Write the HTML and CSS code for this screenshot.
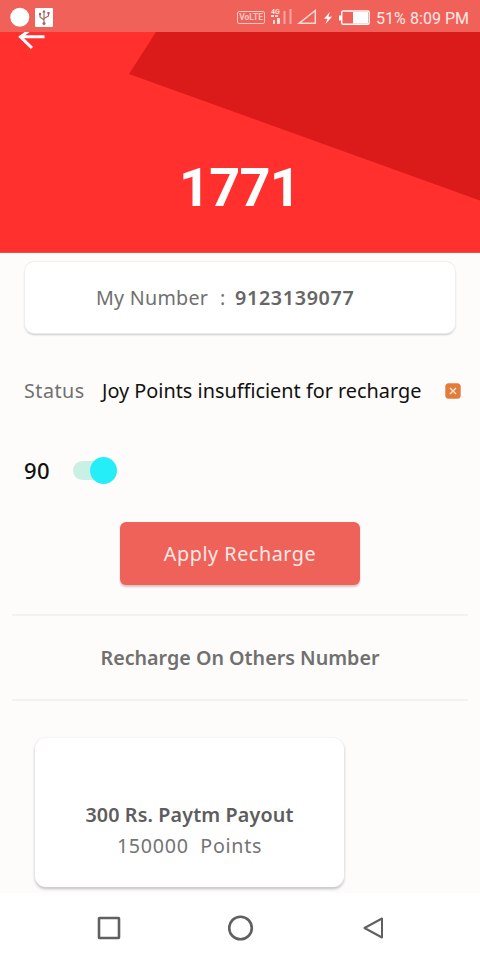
FILE: index.html
```html
<!DOCTYPE html>
<html lang="en">
<head>
<meta charset="utf-8">
<meta name="viewport" content="width=device-width, initial-scale=1">
<title>Recharge</title>
<link rel="stylesheet" href="styles.css">
</head>
<body>
<div class="screen">
  <header class="status-bar">
    <svg class="notifications" width="46" height="32" viewBox="0 0 46 32">
      <circle cx="11.8" cy="17.3" r="9.5" fill="#fff"/>
      <rect x="27" y="8" width="18" height="19" rx="1" fill="#fff"/>
      <g fill="none" stroke="#a5605b" stroke-width="1.1">
        <path d="M36 11v12M32 14v3l4 3M40.500 13v3l-4.500 2.500"/>
      </g>
      <circle cx="36" cy="23.500" r="1.500" fill="#a5605b"/>
      <circle cx="32" cy="14" r="1.200" fill="#a5605b"/>
      <path d="M34.300 12.500 36 9.800l1.700 2.700zM39.400 12h2.200v2.200h-2.200z" fill="#a5605b"/>
    </svg>
    <div class="system">
      <span class="volte">VoLTE</span>
      <svg class="signals" width="108" height="32" viewBox="268 0 108 32">
        <text x="271" y="13.500" class="network">4G</text>
        <g fill="#ffdcd6">
          <path d="M271 15h3v2h-3zM275 15h3v2h-3zM273 20h2v4h-2zM277 18h3v6h-3z"/>
          <path d="M283.500 11h2v13h-2zM289.500 9h2v15h-2z" opacity=".6"/>
        </g>
        <path d="M299 23.300 315.300 10.500v12.800z" fill="none" stroke="#ffdcd6" stroke-width="1.500"/>
        <path d="M329.800 12 324 18.800h3.500L325.500 24l6.500-7.200h-3.600z" fill="#fff"/>
        <rect x="341.700" y="11" width="27.500" height="13.300" rx="1.500" fill="none" stroke="#fff" stroke-width="1.400"/>
        <path d="M339 15.500h2v5h-2zM353 12h15v11.500h-15z" fill="#fff"/>
      </svg>
      <span class="battery-level">51%</span>
      <span class="clock">8:09 PM</span>
    </div>
  </header>

  <section class="hero">
    <svg class="hero-shape" width="480" height="221" viewBox="0 32 480 221">
      <path d="M156 32H480V200.500L129 74z" fill="#da1b1a"/>
    </svg>
    <svg class="back" width="30" height="20" viewBox="16 32 30 20">
      <path d="M44.500 36.800H21M28.500 31 20.500 36.800 32 48" fill="none" stroke="#fff" stroke-width="3"/>
    </svg>
    <h1 class="points">1771</h1>
  </section>

  <main class="content">
    <div class="number-card">
      <span class="label number-label">My Number</span>
      <span class="label colon">:</span>
      <strong class="number">9123139077</strong>
    </div>

    <div class="status-row">
      <span class="label status-label">Status</span>
      <span class="status-text">Joy Points insufficient for recharge</span>
      <svg class="error" width="16" height="16" viewBox="0 0 16 16">
        <rect x=".3" y=".3" width="15.400" height="15.400" rx="3.500" fill="#e37c3b"/>
        <path d="m5 5 6 6m0-6-6 6" stroke="#ffe9d8" stroke-width="1.400"/>
      </svg>
    </div>

    <div class="amount-row">
      <span class="amount">90</span>
      <span class="toggle"><span class="thumb"></span></span>
    </div>

    <button class="apply"><span>Apply Recharge</span></button>

    <div class="others"><span>Recharge On Others Number</span></div>

    <div class="payout-card">
      <strong class="payout-title">300 Rs. Paytm Payout</strong>
      <span class="payout-points">150000&nbsp; Points</span>
    </div>
  </main>

  <nav class="nav-bar">
    <svg width="24" height="26" viewBox="0 0 24 26"><rect x="2" y="3" width="20" height="20" rx=".5"/></svg>
    <svg width="26" height="26" viewBox="0 0 26 26"><circle cx="12.500" cy="13" r="11.300"/></svg>
    <svg width="24" height="26" viewBox="0 0 24 26"><path class="thin" d="M21 3.500v19L3.500 13z"/></svg>
  </nav>
</div>
</body>
</html>
```
FILE: styles.css
```css
* { box-sizing: border-box; }
body {
  margin: 0;
  background: #fdfcfa;
  font-family: "Noto Sans", sans-serif;
  font-size: 19.7px;
}
svg { display: block; flex: none; }
span, strong, h1 { white-space: nowrap; }
.screen { width: 480px; height: 960px; display: flex; flex-direction: column; overflow: hidden; }

.status-bar {
  height: 32px;
  flex: none;
  padding: 0 11px 0 8px;
  display: flex;
  justify-content: space-between;
  background: #ef6159;
  color: #ffe9e5;
  font-family: Roboto, sans-serif;
  font-size: 16px;
}
.system { display: flex; align-items: center; }
.volte {
  width: 28px;
  height: 13px;
  margin: 2px 3px 0 0;
  border: 1.5px solid #ffc9c2;
  border-radius: 2px;
  font-size: 8.5px;
  font-weight: 700;
  line-height: 10px;
  text-align: center;
  color: #ffc9c2;
}
.network { font: 700 7px Roboto, sans-serif; fill: #ffdcd6; }
.battery-level { width: 34px; margin-top: 4px; }
.clock { margin-top: 4px; }

.hero {
  position: relative;
  height: 221px;
  flex: none;
  display: flex;
  justify-content: center;
  background: #ff302d;
  border-bottom: 1px solid #e2534d;
}
.hero-shape { position: absolute; inset: 0; }
.back { position: absolute; left: 16px; top: 0; }
.points {
  position: relative;
  margin: 123px 1px 0 0;
  font-family: Roboto, sans-serif;
  font-size: 54px;
  line-height: 66px;
  font-weight: 700;
  letter-spacing: -0.7px;
  color: #fff;
}

.content { flex: 1; min-height: 0; display: flex; flex-direction: column; padding-top: 9px; }
.label { color: #707070; }
.number-card {
  height: 71px;
  flex: none;
  margin: 0 25px;
  padding: 0 0 1px 71px;
  display: flex;
  align-items: center;
  background: #fff;
  border-radius: 9px;
  box-shadow: 0 0 1px 1px #eeeeed, 0 2px 2px #c9c9c9;
}
.number-label { width: 124px; letter-spacing: 0.25px; }
.colon { width: 15px; }
.number { color: #666; font-weight: 600; letter-spacing: 0.68px; }

.status-row { display: flex; align-items: center; height: 30px; margin: 43px 19px 0 24px; flex: none; }
.status-label { width: 78px; margin-top: -2px; letter-spacing: 0.5px; }
.status-text { flex: 1; margin-top: -2px; font-size: 19.85px; color: #111; }

.amount-row { display: flex; align-items: center; height: 30px; margin: 49px 24px 0; flex: none; }
.amount { width: 49px; font-size: 22px; font-weight: 500; letter-spacing: 0.5px; color: #111; }
.toggle {
  width: 44px;
  height: 19px;
  display: flex;
  align-items: center;
  justify-content: flex-end;
  border-radius: 10px;
  background: #c9f0e5;
}
.thumb { width: 27px; height: 27px; flex: none; border-radius: 50%; background: #26eef8; }

.apply {
  width: 240px;
  height: 63px;
  flex: none;
  margin: 37px auto 0;
  padding: 0;
  border: 0;
  border-radius: 6px;
  background: #ee6259;
  box-shadow: 0 2px 2px #d9c3c0;
  color: #ffe9e5;
  font: inherit;
  letter-spacing: 0.58px;
}

.others {
  height: 87px;
  flex: none;
  margin: 29px 12px 0;
  display: flex;
  align-items: center;
  justify-content: center;
  border-top: 2px solid #f2f2f1;
  border-bottom: 2px solid #f2f2f1;
  font-weight: 600;
  color: #707070;
}

.payout-card {
  width: 309px;
  height: 149px;
  flex: none;
  margin: 37px 0 0 35px;
  padding-top: 61px;
  display: flex;
  flex-direction: column;
  align-items: center;
  background: #fff;
  border-radius: 11px;
  box-shadow: 0 0 2px #e7e7e7, 0 2px 3px #bbb;
  line-height: 31px;
}
.payout-title { color: #5d5d5d; font-weight: 600; letter-spacing: 0.14px; }
.payout-points { color: #747474; letter-spacing: 0.7px; }

.nav-bar {
  height: 67px;
  flex: none;
  padding: 2px 95px 0 97px;
  display: flex;
  align-items: center;
  justify-content: space-between;
  background: #fff;
}
.nav-bar svg { fill: none; stroke: #606060; stroke-width: 2.6; stroke-linejoin: round; }
.nav-bar .thin { stroke-width: 2; }
```
